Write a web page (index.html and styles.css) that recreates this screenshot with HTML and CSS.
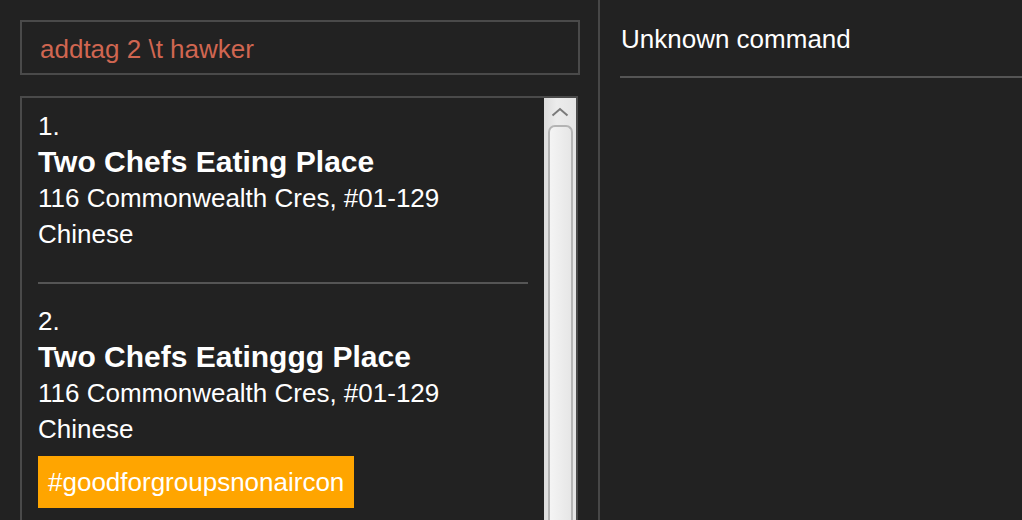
FILE: index.html
```html
<!DOCTYPE html>
<html>
<head>
<meta charset="utf-8">
<link rel="stylesheet" href="styles.css">
</head>
<body>
<div class="app">
  <div class="left">
    <div class="command-box"><span class="command-text">addtag 2 \t hawker</span></div>
    <div class="list-box">
      <div class="list-content">
        <div class="card">
          <div class="idx">1.</div>
          <div class="name">Two Chefs Eating Place</div>
          <div class="line">116 Commonwealth Cres, #01-129</div>
          <div class="line">Chinese</div>
          <div class="divider"></div>
        </div>
        <div class="card">
          <div class="idx">2.</div>
          <div class="name">Two Chefs Eatinggg Place</div>
          <div class="line">116 Commonwealth Cres, #01-129</div>
          <div class="line">Chinese</div>
          <div class="tags"><span class="tag">#goodforgroupsnonaircon</span></div>
        </div>
      </div>
      <div class="scrollbar">
        <div class="arrow">
          <svg width="18" height="10" viewBox="0 0 18 10"><path d="M1.5 8.5 L9 2 L16.5 8.5" fill="none" stroke="#7a7a7a" stroke-width="2"/></svg>
        </div>
        <div class="thumb"></div>
      </div>
    </div>
  </div>
  <div class="right">
    <div class="result">Unknown command</div>
    <div class="result-rule"></div>
  </div>
</div>
</body>
</html>
```

FILE: styles.css
```css
html, body {
  margin: 0;
  padding: 0;
  height: 100%;
  overflow: hidden;
  background: #222222;
  font-family: "Liberation Sans", Arial, sans-serif;
  color: #ffffff;
}

.app {
  display: flex;
  height: 100vh;
}

.left {
  width: 578px;
  flex: none;
  padding: 20px 0 0 20px;
  border-right: 2px solid #474747;
  display: flex;
  flex-direction: column;
  overflow: hidden;
}

.command-box {
  flex: none;
  width: 538px;
  height: 51px;
  border: 2px solid #4a4a4a;
  padding: 0 0 0 18px;
  display: flex;
  align-items: flex-start;
}

.command-text {
  font-size: 26px;
  line-height: 30px;
  padding-top: 12px;
  color: #d06651;
}

.list-box {
  margin-top: 21px;
  width: 554px;
  min-height: 470px;
  border: 2px solid #4a4a4a;
  display: flex;
  flex: none;
}

.list-content {
  flex: 1;
  overflow: hidden;
}

.card {
  padding: 11px 16px 0 16px;
}

.idx {
  font-size: 26px;
  line-height: 34px;
}

.name {
  font-size: 30px;
  font-weight: bold;
  line-height: 37px;
}

.line {
  font-size: 26px;
  line-height: 36px;
}

.divider {
  height: 2px;
  background: #555555;
  margin-top: 30px;
  margin-bottom: 9px;
}

.tags {
  margin-top: 9px;
  display: flex;
}

.tag {
  background: #ffa500;
  color: #ffffff;
  font-size: 26px;
  line-height: 52px;
  padding: 0 10px;
}

.scrollbar {
  width: 32px;
  flex: none;
  background: linear-gradient(to right, #dcdcdc, #ececec 40%, #e4e4e4);
  display: flex;
  flex-direction: column;
  align-items: center;
}

.arrow {
  height: 27px;
  display: flex;
  align-items: center;
  justify-content: center;
}

.thumb {
  width: 21px;
  flex: 1;
  margin-left: 1px;
  border: 2px solid #b4b4b4;
  border-bottom: none;
  border-radius: 7px 7px 0 0;
  background: linear-gradient(to right, #f4f4f4, #e6e6e6);
}

.right {
  flex: 1;
  padding: 24px 0 0 20px;
}

.result {
  font-size: 26px;
  line-height: 30px;
  padding-left: 1px;
}

.result-rule {
  margin-top: 22px;
  height: 2px;
  background: #555555;
}
```
